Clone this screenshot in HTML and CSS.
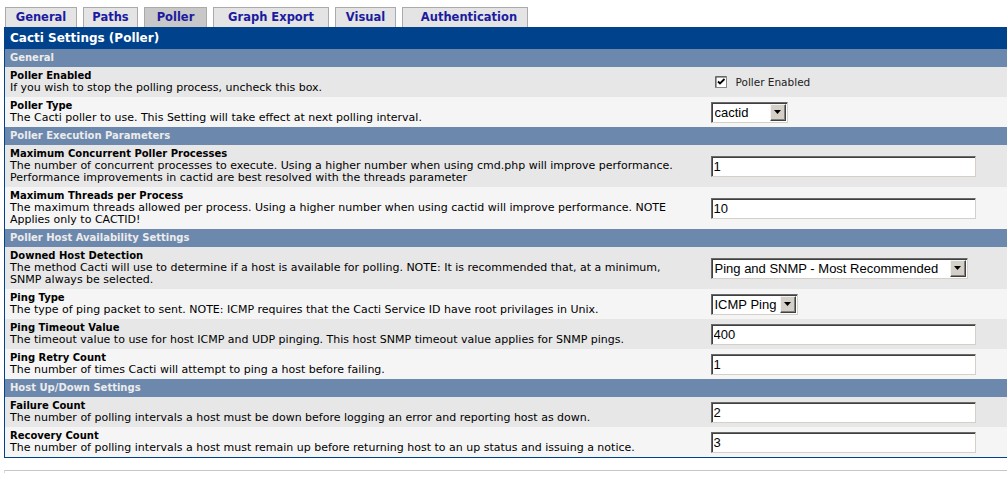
FILE: index.html
```html
<!DOCTYPE html>
<html lang="en">
<head>
    <meta charset="UTF-8">
    <title>Cacti Settings (Poller)</title>
    <link rel="stylesheet" href="styles.css">
</head>
<body>
    <div class="page">
        <div class="tabs">
            <a class="tab tab-general" href="#">General</a>
            <a class="tab tab-paths" href="#">Paths</a>
            <a class="tab tab-poller selected" href="#">Poller</a>
            <a class="tab tab-export" href="#">Graph Export</a>
            <a class="tab tab-visual" href="#">Visual</a>
            <a class="tab tab-auth" href="#">Authentication</a>
        </div>

        <table class="settings">
            <tr class="title"><td colspan="2">Cacti Settings (Poller)</td></tr>

            <tr class="section"><td colspan="2">General</td></tr>
            <tr class="row odd">
                <td class="label"><b>Poller Enabled</b><br>If you wish to stop the polling process, uncheck this box.</td>
                <td class="field">
                    <label class="check">
                        <svg width="12" height="12" viewBox="0 0 12 12">
                            <rect x="0.5" y="0.5" width="11" height="11" fill="#fff" stroke="#888"/>
                            <path d="M1 1H11M1 1V11" stroke="#444" stroke-width="1"/>
                            <path d="M3 5.5L5 7.5L9.5 3" fill="none" stroke="#000" stroke-width="1.8"/>
                        </svg>
                        Poller Enabled
                    </label>
                </td>
            </tr>
            <tr class="row even">
                <td class="label"><b>Poller Type</b><br>The Cacti poller to use. This Setting will take effect at next polling interval.</td>
                <td class="field">
                    <span class="combo combo-type">
                        <select><option>cactid</option></select>
                        <span class="combo-btn"><svg width="7" height="4" viewBox="0 0 7 4"><path d="M0 0H7L3.5 4Z" fill="#000"/></svg></span>
                    </span>
                </td>
            </tr>

            <tr class="section"><td colspan="2">Poller Execution Parameters</td></tr>
            <tr class="row odd">
                <td class="label"><b>Maximum Concurrent Poller Processes</b><br>The number of concurrent processes to execute. Using a higher number when using cmd.php will improve performance. Performance improvements in cactid are best resolved with the threads parameter</td>
                <td class="field"><input class="text" type="text" value="1"></td>
            </tr>
            <tr class="row even">
                <td class="label"><b>Maximum Threads per Process</b><br>The maximum threads allowed per process. Using a higher number when using cactid will improve performance. NOTE Applies only to CACTID!</td>
                <td class="field"><input class="text" type="text" value="10"></td>
            </tr>

            <tr class="section"><td colspan="2">Poller Host Availability Settings</td></tr>
            <tr class="row odd">
                <td class="label"><b>Downed Host Detection</b><br>The method Cacti will use to determine if a host is available for polling. NOTE: It is recommended that, at a minimum, SNMP always be selected.</td>
                <td class="field">
                    <span class="combo combo-detect">
                        <select><option>Ping and SNMP - Most Recommended</option></select>
                        <span class="combo-btn"><svg width="7" height="4" viewBox="0 0 7 4"><path d="M0 0H7L3.5 4Z" fill="#000"/></svg></span>
                    </span>
                </td>
            </tr>
            <tr class="row even">
                <td class="label"><b>Ping Type</b><br>The type of ping packet to sent. NOTE: ICMP requires that the Cacti Service ID have root privilages in Unix.</td>
                <td class="field">
                    <span class="combo combo-ping">
                        <select><option>ICMP Ping</option></select>
                        <span class="combo-btn"><svg width="7" height="4" viewBox="0 0 7 4"><path d="M0 0H7L3.5 4Z" fill="#000"/></svg></span>
                    </span>
                </td>
            </tr>
            <tr class="row odd">
                <td class="label"><b>Ping Timeout Value</b><br>The timeout value to use for host ICMP and UDP pinging. This host SNMP timeout value applies for SNMP pings.</td>
                <td class="field"><input class="text" type="text" value="400"></td>
            </tr>
            <tr class="row even">
                <td class="label"><b>Ping Retry Count</b><br>The number of times Cacti will attempt to ping a host before failing.</td>
                <td class="field"><input class="text" type="text" value="1"></td>
            </tr>

            <tr class="section"><td colspan="2">Host Up/Down Settings</td></tr>
            <tr class="row odd">
                <td class="label"><b>Failure Count</b><br>The number of polling intervals a host must be down before logging an error and reporting host as down.</td>
                <td class="field"><input class="text" type="text" value="2"></td>
            </tr>
            <tr class="row even">
                <td class="label"><b>Recovery Count</b><br>The number of polling intervals a host must remain up before returning host to an up status and issuing a notice.</td>
                <td class="field"><input class="text" type="text" value="3"></td>
            </tr>
        </table>

        <div class="rule"></div>
    </div>
</body>
</html>
```

FILE: styles.css
```css
* {
    box-sizing: border-box;
}

html, body {
    margin: 0;
    padding: 0;
    background: #fff;
    overflow: hidden;
}

body {
    font-family: "DejaVu Sans", Verdana, sans-serif;
    font-size: 11px;
    color: #000;
}

.page {
    padding: 7px 0 0 4px;
    width: 1020px;
}

.tabs {
    display: flex;
    gap: 6px;
    margin-left: 1px;
    height: 20px;
}

.tab {
    display: block;
    height: 20px;
    line-height: 19px;
    text-align: center;
    font-size: 11.5px;
    font-weight: bold;
    color: #1b1ba0;
    text-decoration: none;
    background: #e4e4e4;
    border: 1px solid #aaa;
    border-bottom: none;
}

.tab.selected {
    background: #c8c8c8;
}

.tab-general { width: 72px; }
.tab-paths { width: 55px; }
.tab-poller { width: 63px; }
.tab-export { width: 116px; }
.tab-visual { width: 61px; }
.tab-auth { width: 126px; padding-left: 8px; }

.settings {
    width: 1012px;
    border-collapse: collapse;
    border: 1px solid #00438c;
}

.settings td {
    padding: 3px 5px;
    line-height: 12px;
}

.settings b {
    font-size: 10px;
}

.title td {
    background: #00438c;
    color: #fff;
    font-size: 12px;
    font-weight: bold;
    line-height: 15px;
}

.section td {
    background: #6d88ad;
    color: #ececec;
    font-size: 10px;
    font-weight: bold;
}

.row.odd td {
    background: #e7e7e7;
}

.row.even td {
    background: #f5f5f5;
}

.label {
    width: 685px;
    vertical-align: top;
}

.field {
    padding: 0 6px 0 21px !important;
    vertical-align: middle;
}

.check {
    display: flex;
    align-items: center;
    gap: 9px;
    margin-left: 4px;
    font-size: 10.5px;
    color: #222;
}

.text {
    display: block;
    width: 265px;
    height: 21px;
    padding: 0 2px;
    margin: 0;
    font-family: "Liberation Sans", Arial, sans-serif;
    font-size: 13px;
    color: #000;
    background: #fff;
    border: 1px solid;
    border-color: #6a6a6a #d4d0c8 #d4d0c8 #6a6a6a;
    box-shadow: inset 1px 1px 0 #404040;
    outline: none;
}

.combo {
    display: flex;
    align-items: center;
    height: 21px;
    background: #fff;
    border: 1px solid;
    border-color: #6a6a6a #d4d0c8 #d4d0c8 #6a6a6a;
    box-shadow: inset 1px 1px 0 #404040;
    padding: 1px;
}

.combo select {
    flex: 1;
    min-width: 0;
    appearance: none;
    -webkit-appearance: none;
    border: none;
    background: transparent;
    font-family: "Liberation Sans", Arial, sans-serif;
    font-size: 13px;
    color: #000;
    padding: 0 0 0 2px;
    margin: 0;
    outline: none;
}

.combo-btn {
    display: flex;
    align-items: center;
    justify-content: center;
    flex: none;
    width: 16px;
    height: 17px;
    background: #d4d0c8;
    border: 1px solid;
    border-color: #f4f4f4 #404040 #404040 #f4f4f4;
    box-shadow: inset -1px -1px 0 #808080;
}

.combo-type { width: 77px; }
.combo-detect { width: 257px; }
.combo-ping { width: 87px; }

.rule {
    margin-top: 12px;
    height: 3px;
    border-top: 1px solid #c6c6c6;
    border-left: 1px solid #dcdcdc;
    width: 1010px;
}
```
